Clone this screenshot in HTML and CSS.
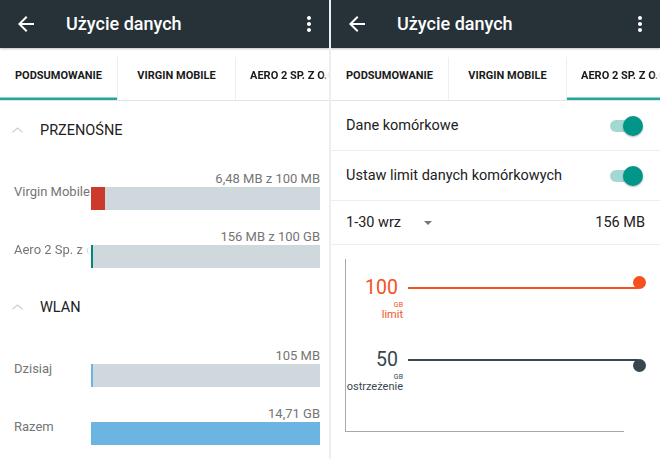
FILE: index.html
```html
<!DOCTYPE html>
<html lang="pl">
<head>
<meta charset="utf-8">
<title>Użycie danych</title>
<link rel="stylesheet" href="styles.css">
</head>
<body>
<div class="screen">
  <section class="panel">
    <header class="toolbar">
      <svg class="icon" viewBox="0 0 24 24"><path d="M20 11H7.83l5.59-5.59L12 4l-8 8 8 8 1.41-1.41L7.83 13H20v-2z"/></svg>
      <h1 class="title">Użycie danych</h1>
      <svg class="icon more" viewBox="0 0 24 24"><path d="M12 8c1.1 0 2-.9 2-2s-.9-2-2-2-2 .9-2 2 .9 2 2 2zm0 2c-1.1 0-2 .9-2 2s.9 2 2 2 2-.9 2-2-.9-2-2-2zm0 6c-1.1 0-2 .9-2 2s.9 2 2 2 2-.9 2-2-.9-2-2-2z"/></svg>
    </header>
    <nav class="tabs">
      <div class="tab active">PODSUMOWANIE</div>
      <div class="tab">VIRGIN MOBILE</div>
      <div class="tab tab-last"><span class="tab-fade">AERO 2 SP. Z O.O.</span></div>
    </nav>
    <div class="summary">
      <div class="sec-head">
        <svg class="chev" viewBox="0 0 12 6"><polyline points="0.5,5.5 6,0.8 11.5,5.5"/></svg>
        <span>PRZENOŚNE</span>
      </div>
      <div class="usage">
        <div class="usage-label">Virgin Mobile</div>
        <div class="usage-main">
          <div class="usage-val">6,48 MB z 100 MB</div>
          <div class="bar"><div class="fill red" style="width:14px"></div></div>
        </div>
      </div>
      <div class="usage">
        <div class="usage-label fade">Aero 2 Sp. z o.o.</div>
        <div class="usage-main">
          <div class="usage-val">156 MB z 100 GB</div>
          <div class="bar"><div class="fill teal" style="width:2px"></div></div>
        </div>
      </div>
      <div class="sec-head second">
        <svg class="chev" viewBox="0 0 12 6"><polyline points="0.5,5.5 6,0.8 11.5,5.5"/></svg>
        <span>WLAN</span>
      </div>
      <div class="usage">
        <div class="usage-label">Dzisiaj</div>
        <div class="usage-main">
          <div class="usage-val">105 MB</div>
          <div class="bar"><div class="fill blue" style="width:2px"></div></div>
        </div>
      </div>
      <div class="usage">
        <div class="usage-label">Razem</div>
        <div class="usage-main">
          <div class="usage-val">14,71 GB</div>
          <div class="bar"><div class="fill blue" style="width:100%"></div></div>
        </div>
      </div>
    </div>
  </section>
  <div class="divider"></div>
  <section class="panel">
    <header class="toolbar">
      <svg class="icon" viewBox="0 0 24 24"><path d="M20 11H7.83l5.59-5.59L12 4l-8 8 8 8 1.41-1.41L7.83 13H20v-2z"/></svg>
      <h1 class="title">Użycie danych</h1>
      <svg class="icon more" viewBox="0 0 24 24"><path d="M12 8c1.1 0 2-.9 2-2s-.9-2-2-2-2 .9-2 2 .9 2 2 2zm0 2c-1.1 0-2 .9-2 2s.9 2 2 2 2-.9 2-2-.9-2-2-2zm0 6c-1.1 0-2 .9-2 2s.9 2 2 2 2-.9 2-2-.9-2-2-2z"/></svg>
    </header>
    <nav class="tabs">
      <div class="tab">PODSUMOWANIE</div>
      <div class="tab">VIRGIN MOBILE</div>
      <div class="tab tab-last active"><span class="tab-fade">AERO 2 SP. Z O.O.</span></div>
    </nav>
    <div class="settings">
      <div class="row">
        <span class="row-text">Dane komórkowe</span>
        <span class="switch"><span class="track"></span><span class="knob"></span></span>
      </div>
      <div class="row">
        <span class="row-text">Ustaw limit danych komórkowych</span>
        <span class="switch"><span class="track"></span><span class="knob"></span></span>
      </div>
      <div class="row cycle">
        <span class="row-text">1-30 wrz</span>
        <span class="caret"></span>
        <span class="row-value">156 MB</span>
      </div>
      <div class="chart">
        <div class="sweep limit">
          <div class="sweep-label">
            <div class="sweep-num">100</div>
            <div class="sweep-unit">GB</div>
            <div class="sweep-cap">limit</div>
          </div>
          <div class="sweep-track"><div class="sweep-line"></div><div class="handle up"></div></div>
        </div>
        <div class="sweep warn">
          <div class="sweep-label">
            <div class="sweep-num">50</div>
            <div class="sweep-unit">GB</div>
            <div class="sweep-cap">ostrzeżenie</div>
          </div>
          <div class="sweep-track"><div class="sweep-line"></div><div class="handle down"></div></div>
        </div>
      </div>
    </div>
  </section>
</div>
</body>
</html>
```
FILE: styles.css
```css
* { box-sizing: border-box; }
html, body { margin: 0; padding: 0; background: #fff; }
body { font-family: Roboto, "Noto Sans", "Liberation Sans", sans-serif; color: #212121; }
.screen { display: flex; width: 660px; height: 459px; overflow: hidden; }
.panel { width: 329px; flex: none; display: flex; flex-direction: column; overflow: hidden; }
.divider { width: 2px; flex: none; background: #eceff1; }

.toolbar { height: 48px; background: #263238; display: flex; align-items: center; padding: 0 8px 0 14px; box-shadow: 0 1px 2px rgba(0,0,0,0.25); position: relative; z-index: 1; }
.icon { width: 24px; height: 24px; fill: #fff; flex: none; }
.title { margin: 0 0 0 28px; flex: 1; font-size: 18px; font-weight: 500; color: #fff; line-height: 48px; }

.tabs { height: 53px; display: flex; padding-top: 9px; border-bottom: 1px solid #e4e4e4; }
.tab { width: 118px; flex: none; display: flex; align-items: center; justify-content: center; padding-bottom: 7px; border-right: 1px solid #eeeeee; font-size: 11px; font-weight: 700; color: #1a1a1a; white-space: nowrap; }
.tab.active { box-shadow: inset 0 -2.5px 0 #26a69a; }
.tab-last { flex: 1; width: auto; justify-content: flex-start; padding-left: 14px; border-right: 0; overflow: hidden; }
.tab-fade { display: block; overflow: hidden; width: 79px; -webkit-mask-image: linear-gradient(to right, #000 72px, transparent 79px); mask-image: linear-gradient(to right, #000 72px, transparent 79px); }

.summary { display: flex; flex-direction: column; padding-right: 9px; }
.sec-head { height: 58px; display: flex; align-items: center; padding-left: 12px; font-size: 14.5px; color: #212121; }
.sec-head.second { margin-top: 3px; }
.chev { width: 11px; height: 6px; margin-right: 17px; fill: none; stroke: #cfcfcf; stroke-width: 1.2; }
.usage { height: 58px; display: flex; padding-top: 12px; }
.usage-label { width: 91px; flex: none; padding-left: 14px; padding-top: 13px; font-size: 13px; line-height: 15px; color: #757575; white-space: nowrap; overflow: hidden; }
.usage-label.fade { -webkit-mask-image: linear-gradient(to right, #000 80px, transparent 90px); mask-image: linear-gradient(to right, #000 80px, transparent 90px); }
.usage-main { flex: 1; display: flex; flex-direction: column; }
.usage-val { text-align: right; font-size: 13px; line-height: 15px; color: #757575; }
.bar { margin-top: 1px; height: 23px; background: #cfd8dc; display: flex; }
.fill { height: 100%; }
.fill.red { background: #cc3a2b; }
.fill.teal { background: #00897b; }
.fill.blue { background: #6cb4e2; }

.settings { display: flex; flex-direction: column; }
.row { height: 50px; display: flex; align-items: center; padding: 0 17px 0 15px; border-bottom: 1px solid #eeeeee; font-size: 14.5px; color: #212121; }
.row-text { flex: 1; }
.row.cycle { height: 44px; padding-right: 15px; }
.row.cycle .row-text { flex: none; width: 78px; }
.caret { width: 0; height: 0; border-left: 4px solid transparent; border-right: 4px solid transparent; border-top: 4px solid #757575; margin-top: 1px; }
.row-value { margin-left: auto; }
.switch { display: flex; align-items: center; flex: none; }
.track { width: 26px; height: 12px; border-radius: 6px; background: #a4d9d3; }
.knob { width: 20px; height: 20px; border-radius: 50%; background: #009688; margin-left: -13px; box-shadow: 0 1px 2px rgba(0,0,0,0.3); }

.chart { margin: 14px 0 0 14px; width: 301px; height: 173px; border-left: 1px solid #a8a8a8; background: linear-gradient(#a8a8a8, #a8a8a8) left bottom / 278px 1px no-repeat; padding-top: 18px; display: flex; flex-direction: column; gap: 28px; }
.sweep { display: flex; gap: 5px; }
.sweep-label { width: 57px; flex: none; text-align: right; }
.sweep-num { font-size: 19.5px; line-height: 22px; padding-right: 5px; }
.sweep-unit { font-size: 7px; line-height: 8px; margin-top: 2px; }
.sweep-cap { font-size: 11px; line-height: 12px; }
.sweep-track { flex: 1; height: 22px; display: flex; align-items: center; }
.sweep-line { flex: 1; height: 2px; }
.handle { width: 13px; height: 13px; border-radius: 50%; margin-left: -5px; flex: none; }
.handle.up { margin-bottom: 11px; }
.handle.down { margin-top: 11px; }
.limit { color: #f4511e; }
.limit .sweep-line, .limit .handle { background: #f4511e; }
.warn { color: #37474f; }
.warn .sweep-line, .warn .handle { background: #37474f; }
```
